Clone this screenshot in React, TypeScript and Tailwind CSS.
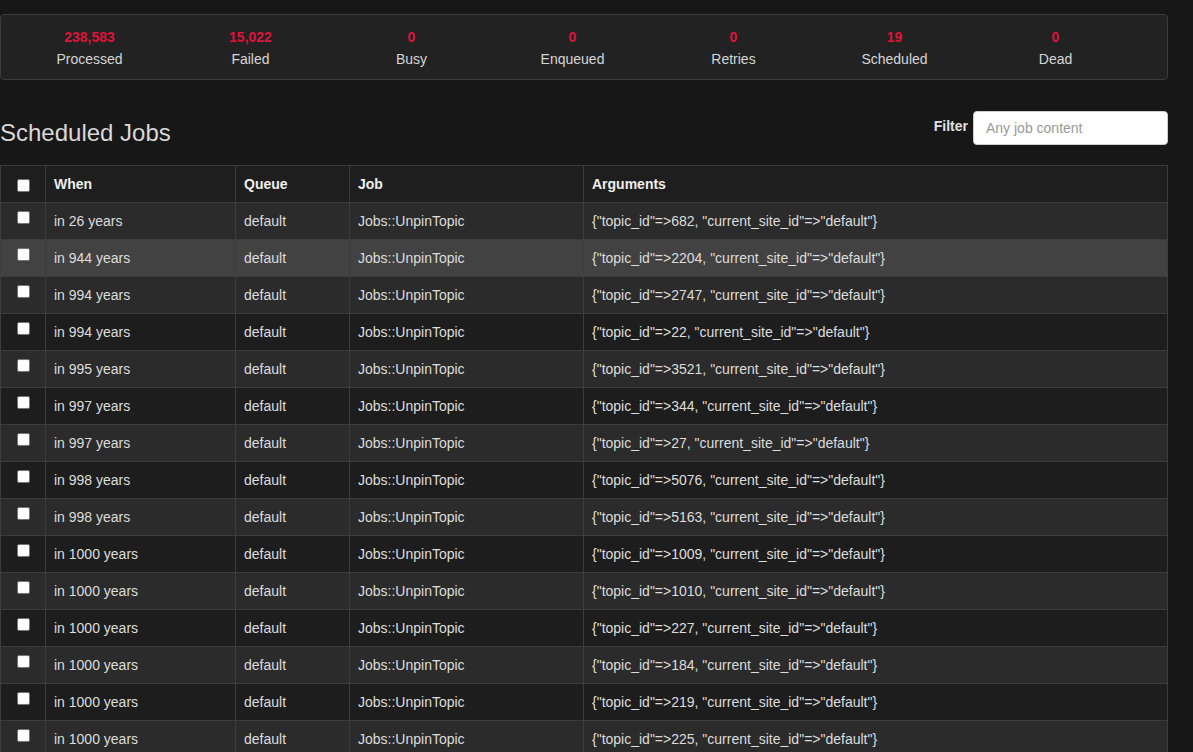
import React from 'react';

const stats = [
  { label: 'Processed', value: '238,583' },
  { label: 'Failed', value: '15,022' },
  { label: 'Busy', value: '0' },
  { label: 'Enqueued', value: '0' },
  { label: 'Retries', value: '0' },
  { label: 'Scheduled', value: '19' },
  { label: 'Dead', value: '0' },
];

const jobs: [string, string][] = [
  ['in 26 years', '682'],
  ['in 944 years', '2204'],
  ['in 994 years', '2747'],
  ['in 994 years', '22'],
  ['in 995 years', '3521'],
  ['in 997 years', '344'],
  ['in 997 years', '27'],
  ['in 998 years', '5076'],
  ['in 998 years', '5163'],
  ['in 1000 years', '1009'],
  ['in 1000 years', '1010'],
  ['in 1000 years', '227'],
  ['in 1000 years', '184'],
  ['in 1000 years', '219'],
  ['in 1000 years', '225'],
];

const Box = () => (
  <span className="inline-block w-[13px] h-[13px] bg-white border border-[#767676] rounded-[2px]" />
);

export default function App() {
  return (
    <div className="min-h-screen w-full bg-[#171717] font-['Liberation_Sans',Arial,sans-serif] text-[14px] leading-[20px] text-[#dddddd] overflow-hidden">
      <div className="w-[1168px] pt-[14px]">
        {/* summary bar */}
        <div className="h-[66px] flex items-start pt-[12px] pl-[8px] bg-[#222222] border border-[#3c3c3c] rounded-[4px]">
          {stats.map((s) => (
            <div key={s.label} className="w-[161px] flex flex-col items-center">
              <span className="text-[14px] leading-[20px] font-bold text-[#dc143c]">{s.value}</span>
              <span className="text-[14px] leading-[20px] mt-[2px] text-[#d6d6d6]">{s.label}</span>
            </div>
          ))}
        </div>

        <div className="flex justify-between items-start mt-[31px] h-[54px]">
          <h3 className="text-[24px] leading-[26px] text-[#d8d8d8] mt-[9px]">Scheduled Jobs</h3>
          <div className="flex items-start gap-[5px]">
            <span className="font-bold text-[#e0e0e0] mt-[5px]">Filter</span>
            <input
              className="w-[195px] h-[34px] rounded-[4px] bg-white border border-[#cccccc] px-[12px] text-[14px] text-[#555] placeholder-[#999] outline-none"
              placeholder="Any job content"
            />
          </div>
        </div>

        <table className="w-[1168px] border-collapse table-fixed border border-[#3c3c3c]">
          <colgroup>
            <col className="w-[45px]" />
            <col className="w-[190px]" />
            <col className="w-[114px]" />
            <col className="w-[234px]" />
            <col />
          </colgroup>
          <thead>
            <tr className="bg-[#1e1e1e] h-[37px]">
              <th className="border border-[#3c3c3c] text-center align-middle">
                <div className="flex justify-center pt-[3px]"><Box /></div>
              </th>
              {['When', 'Queue', 'Job', 'Arguments'].map((h) => (
                <th key={h} className="border border-[#3c3c3c] px-[8px] text-left font-bold text-[#eeeeee]">{h}</th>
              ))}
            </tr>
          </thead>
          <tbody>
            {jobs.map(([when, id], i) => {
              const bg = i === 1 ? 'bg-[#424242]' : i % 2 === 0 ? 'bg-[#2b2b2b]' : 'bg-[#1d1d1d]';
              return (
                <tr key={i} className={`${bg} h-[37px]`}>
                  <td className="border border-[#3c3c3c] align-top pt-[8px]">
                    <div className="flex justify-center"><Box /></div>
                  </td>
                  <td className="border border-[#3c3c3c] px-[8px] py-[8px]">{when}</td>
                  <td className="border border-[#3c3c3c] px-[8px] py-[8px]">default</td>
                  <td className="border border-[#3c3c3c] px-[8px] py-[8px]">Jobs::UnpinTopic</td>
                  <td className="border border-[#3c3c3c] px-[8px] py-[8px]">
                    {`{"topic_id"=>${id}, "current_site_id"=>"default"}`}
                  </td>
                </tr>
              );
            })}
          </tbody>
        </table>
      </div>
    </div>
  );
}
